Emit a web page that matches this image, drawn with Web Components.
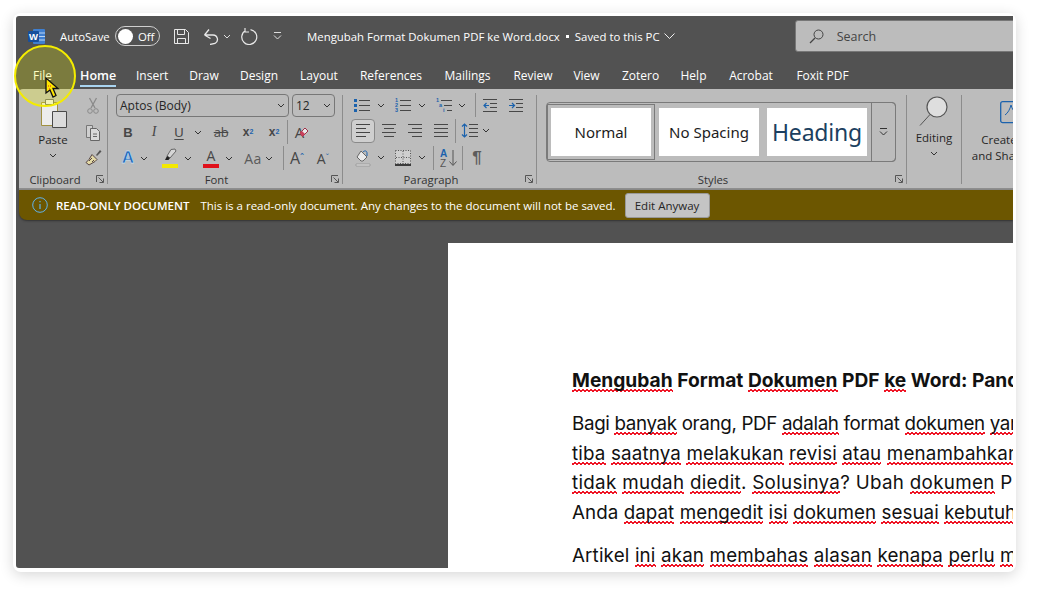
<!DOCTYPE html>
<html lang="id"><head><meta charset="utf-8"><title>Word</title>
<style>
html,body{margin:0;padding:0;background:#fff;width:1040px;height:596px;overflow:hidden;font-family:"Open Sans","Liberation Sans",sans-serif}
</style></head><body>
<script>
const UI='"Open Sans","Liberation Sans",sans-serif';
const G='#474747',BL='#1b62ad';
const svg=(w,h,b)=>`<svg xmlns="http://www.w3.org/2000/svg" width="${w}" height="${h}" viewBox="0 0 ${w} ${h}" fill="none" stroke-linecap="butt">${b}</svg>`;
const lines=(x,ys,x2,c=G)=>ys.map(y=>`<path d="M${x} ${y}.5H${x2}" stroke="${c}"/>`).join('');
const ICONS={
 caret:[8,svg(8,5,`<path d="M1 1l3 3 3-3" stroke="#333"/>`)],
 sep:[1,`<i style="display:block;width:1px;height:24px;background:#8c8c8c"></i>`],
 cut:[12,svg(12,18,`<path d="M2.500 1L8 11M9.500 1L4 11" stroke="#8a8a8a" stroke-width="1.300"/><circle cx="3" cy="14" r="2.300" stroke="#8a8a8a"/><circle cx="9" cy="14" r="2.300" stroke="#8a8a8a"/>`)],
 copy:[16,svg(16,17,`<path d="M1.500 1.500h6v12h-6z" fill="#cfcfcf" stroke="#777"/><path d="M5.500 4.500h6l3 3v9h-9z" fill="#d9d9d9" stroke="#666"/><path d="M8 10h4M8 12.500h4" stroke="#666"/>`)],
 painter:[17,svg(17,17,`<path d="M11 6l4-5 1.500 1.500-4.500 4.500z" fill="#555"/><path d="M7 5.500l5 5-2 2-6 3.500-3-2.500 3-3z" fill="#e3d9a5" stroke="#544"/><path d="M4 12l3-3M7 13l2-2" stroke="#544"/>`)],
 B:[10,`<b style="font:bold 13px 'Liberation Sans';color:${G}">B</b>`],
 I:[8,`<i style="font:italic 14px 'Liberation Serif';color:${G}">I</i>`],
 U:[11,`<u style="font:13px 'Liberation Sans';color:${G};text-underline-offset:2px">U</u>`],
 ab:[16,`<s style="font:13px 'Open Sans';color:${G};letter-spacing:-.3px">ab</s>`],
 sub:[12,`<span style="font:bold 12px/1 'Liberation Sans';color:${G}">x<sub style="font-size:7px;color:${BL};vertical-align:-3px;line-height:0">2</sub></span>`],
 sup:[12,`<span style="font:bold 12px/1 'Liberation Sans';color:${G}">x<sup style="font-size:7px;color:${BL};vertical-align:5px;line-height:0">2</sup></span>`],
 eraser:[18,`<span style="display:flex;align-items:center"><span style="font:15px 'Open Sans';color:${G};margin-right:-5px">A</span>${svg(10,10,`<path d="M1 6l5-5 3 3-5 5H3z" fill="#e9e9e9" stroke="#a03048"/><path d="M1 6l2-2 3 3-2 2H3z" fill="#c9405c"/>`)}</span>`],
 Afx:[14,`<span style="font:bold 17px 'Liberation Sans';color:#1c66b8;-webkit-text-stroke:.4px #eaf4ff;text-shadow:0 0 1.500px #7ec4f0">A</span>`],
 hl:[16,`<span style="display:block;height:20px;position:relative;width:16px"><svg width="16" height="15" viewBox="0 0 16 15" fill="none"><path d="M9 1.500L13 1l1 2-6 7-3-2z" fill="#d6d6d6" stroke="#666"/><path d="M5 8l3 2-1.500 2H3z" fill="#222"/></svg><i style="position:absolute;left:0;bottom:0;width:16px;height:4px;background:#f4e800"></i></span>`],
 fc:[16,`<span style="display:block;height:20px;position:relative;width:16px;text-align:center;font:14px/15px 'Open Sans';color:${G}">A<i style="position:absolute;left:0;bottom:0;width:16px;height:4px;background:#e0101a"></i></span>`],
 Aa:[18,`<span style="font:14px 'Open Sans';color:#5a5a5a;letter-spacing:.5px">Aa</span>`],
 grow:[16,`<span style="font:16px 'Open Sans';color:${G}">A<sup style="font-size:10px;color:${BL};vertical-align:5px;line-height:0">ˆ</sup></span>`],
 shrink:[15,`<span style="font:14px 'Open Sans';color:${G}">A<sup style="font-size:9px;color:${BL};vertical-align:5px;line-height:0">ˇ</sup></span>`],
 bullets:[16,svg(16,14,`<path d="M0 1h3v3H0zM0 6h3v3H0zM0 11h3v3H0z" fill="${BL}"/>`+lines(5,[2,7,12],16))],
 nums:[16,svg(16,14,`<g fill="${BL}" font-family="Liberation Sans" font-size="5.500" font-weight="700"><text x="0" y="4">1</text><text x="0" y="9">2</text><text x="0" y="14">3</text></g>`+lines(5,[2,7,12],16))],
 multi:[16,svg(16,14,`<g fill="${BL}" font-family="Liberation Sans" font-size="5.500" font-weight="700"><text x="0" y="4">1</text><text x="3" y="9">a</text><text x="7" y="14">i</text></g>`+lines(5,[2],16)+lines(8,[7],16)+lines(11,[12],16))],
 outd:[14,svg(14,13,lines(0,[0,12],14)+lines(7,[4,8],14)+`<path d="M6 6.500H1M3.500 4L1 6.500 3.500 9" stroke="${BL}" stroke-width="1.200"/>`)],
 ind:[14,svg(14,13,lines(0,[0,12],14)+lines(7,[4,8],14)+`<path d="M0 6.500h5M3 4l2.500 2.500L3 9" stroke="${BL}" stroke-width="1.200"/>`)],
 left:[24,`<span style="display:flex;width:22px;height:22px;border:1px solid #8a8a8a;border-radius:4px;background:#cfcfcf;align-items:center;justify-content:center">${svg(14,13,lines(0,[0,8],14,'#444')+lines(0,[4,12],10,'#444'))}</span>`],
 center:[14,svg(14,13,lines(0,[0,8],14)+lines(2,[4,12],12))],
 right:[14,svg(14,13,lines(0,[0,8],14)+lines(4,[4,12],14))],
 just:[14,svg(14,13,lines(0,[0,4,8,12],14))],
 spacing:[17,svg(17,16,`<path d="M3.500 1v13M1 3.500L3.500 1 6 3.500M1 11.500L3.500 14 6 11.500" stroke="${BL}" stroke-width="1.200"/>`+lines(8,[1,5,9,13],17))],
 shade:[16,svg(16,18,`<path d="M6 2l6 6-4 4H6L2 8z" fill="#e9e9e9" stroke="#666"/><path d="M8 3c2-2 4-1 4 1v3" stroke="${BL}"/><path d="M1 15h14v2H1z" fill="#dcdcdc" stroke="#888" stroke-width=".6"/>`)],
 borders:[16,svg(16,16,`<path d="M.5.500h15v13H.5z" fill="#cfcfcf" stroke="#555" stroke-dasharray="1 1.500"/><path d="M8 1v13M1 7.500h14" stroke="#555" stroke-dasharray="1 1.500"/><path d="M0 15h16" stroke="#111" stroke-width="1.500"/>`)],
 sort:[17,svg(17,18,`<text x="0" y="8" fill="${BL}" font-family="Liberation Sans" font-size="10" font-weight="700">A</text><text x="0" y="17.500" fill="#555" font-family="Liberation Sans" font-size="10">Z</text><path d="M13 1v15M9.500 12.500L13 16.500l3.500-4" stroke="#555"/>`)],
 pil:[11,`<b style="font:bold 17px 'Liberation Sans';color:#5c5c5c">¶</b>`],
 launch:[8,svg(8,8,`<path d="M.5 7V.5H7" stroke="#555"/><path d="M2.500 2.500L7 7M3.500 7.500H7.500V3.500" stroke="#555"/>`)]
};
const def=(n,c)=>customElements.define(n,c);
const shadow=(el,h)=>{el.attachShadow({mode:'open'}).innerHTML=h};
def('r-row',class extends HTMLElement{connectedCallback(){
 let x=+this.getAttribute('x0'),out='';
 for(const it of this.getAttribute('items').trim().split(/\s+/)){
  const [n,c]=it.split('@');const [w,h]=ICONS[n];const l=+c-w/2;
  out+=`<span style="margin-left:${l-x}px;width:${w}px">${h}</span>`;x=l+w;
 }
 shadow(this,`<style>:host{display:flex;align-items:center;height:${this.getAttribute('h')||26}px}span{display:flex;flex:none;align-items:center;justify-content:center;line-height:1}</style>${out}`);
}});
def('r-group',class extends HTMLElement{connectedCallback(){
 const lab=this.getAttribute('label'),w=this.getAttribute('w');
 shadow(this,`<style>:host{display:flex;flex:none;width:${w}px;height:99px;color:#262626}
 .c{flex:1;display:flex;flex-direction:column;min-width:0}.m{height:82px}
 .l{height:16px;display:flex;align-items:center;font-size:11.300px;color:#333}
 .l span{flex:1;text-align:center}.l svg{margin-right:3px;margin-left:6px}
 .s{width:1px;background:#8c8c8c;margin:6px 0 4px}</style>
 <div class="c"><div class="m"><slot></slot></div>${lab?`<div class="l"><span>${lab}</span>${ICONS.launch[1]}</div>`:''}</div><div class="s"></div>`);
}});
def('r-combo',class extends HTMLElement{connectedCallback(){
 shadow(this,`<style>:host{display:flex;box-sizing:border-box;height:23px;width:${this.getAttribute('w')}px;border:1px solid #777;border-radius:4px;align-items:center;justify-content:space-between;padding:0 3px;font-size:12px;color:#262626;flex:none}</style><slot></slot>${ICONS.caret[1]}`);
}});
def('win-frame',class extends HTMLElement{connectedCallback(){
 shadow(this,`<style>:host{display:block;position:relative;box-sizing:border-box;width:1003px;height:559px;margin:13px 0 0 13px;padding:3px 3px 4px;background:#fff;border-radius:8px;box-shadow:0 3px 14px rgba(0,0,0,.16)}
 .w{height:100%;background:#525252;border-radius:3px 0 0 3px;overflow:hidden;display:flex;flex-direction:column;font-family:${UI}}</style><div class="w"><slot></slot></div><slot name="over"></slot>`);
}});
def('title-bar',class extends HTMLElement{connectedCallback(){
 shadow(this,`<style>:host{display:flex;flex:none;height:41px;align-items:center;color:#fff;font-size:11.400px;white-space:nowrap;padding-bottom:1px;box-sizing:border-box}
 .t{display:flex;flex:none;box-sizing:border-box;width:45px;height:20px;border:1px solid #cfcfcf;border-radius:10px;align-items:center;margin-left:7px;padding-left:2px;font-size:11.400px}
 .t i{width:15px;height:15px;border-radius:50%;background:#fff;margin-right:5px;flex:none}
 .s{display:flex;box-sizing:border-box;width:260px;height:32px;margin-left:120px;background:#bcbcbc;border:1px solid #777;border-radius:3px;align-items:center;color:#444;flex:none;padding-left:13px;font-size:12.500px}
 svg,span{flex:none}</style>
 <svg style="margin-left:12px" width="17" height="17" viewBox="0 0 17 17"><rect x="5" y="1" width="12" height="15" rx="1" fill="#3f7fd0"/><path d="M9 5h8M9 8.500h8M9 12h8" stroke="#bcd6f3"/><rect y="3" width="11" height="11" rx="1" fill="#174f9c"/><text x="5.500" y="12" text-anchor="middle" fill="#fff" font-family="Liberation Sans" font-size="9.500" font-weight="700">W</text></svg>
 <span style="margin-left:15px;width:48px">AutoSave</span>
 <div class="t"><i></i>Off</div>
 <svg style="margin-left:13px" width="17" height="17" viewBox="0 0 17 17" fill="none" stroke="#e8e8e8"><path d="M1.500 1.500h11l3 3v11h-14z"/><path d="M4.500 1.500v5h7v-5M4.500 15.500v-5h8v5"/></svg>
 <svg style="margin-left:13px" width="17" height="17" viewBox="0 0 17 17" fill="none" stroke="#e8e8e8" stroke-width="1.300"><path d="M1.500 7L6 1.500M1.500 7l6 3.500M1.500 7H10a4.500 4.500 0 0 1 2 8.500L7 16.500"/></svg>
 <svg style="margin-left:3px" width="8" height="5" viewBox="0 0 8 5" fill="none"><path d="M1 1l3 3 3-3" stroke="#ddd"/></svg>
 <svg style="margin-left:10px" width="17" height="17" viewBox="0 0 17 17" fill="none" stroke="#e8e8e8" stroke-width="1.200"><path d="M9.500 1.600A7.500 7.500 0 1 1 4.500 2.500M4 0v4h4" /></svg>
 <svg style="margin-left:15px" width="9" height="8" viewBox="0 0 9 8" fill="none" stroke="#ddd"><path d="M1 .5h7M1 3.500l3.500 3.500L8 3.500"/></svg>
 <span style="margin-left:25px">Mengubah Format Dokumen PDF ke Word.docx</span><i style="width:3px;height:3px;background:#fff;margin:1px 6px 0 6px;flex:none"></i><span>Saved to this PC</span>
 <svg style="margin-left:4px" width="11" height="6" viewBox="0 0 11 6" fill="none"><path d="M.5.500l5 5 5-5" stroke="#eee"/></svg>
 <div class="s"><svg width="15" height="15" viewBox="0 0 15 15" fill="none" stroke="#444"><circle cx="9.500" cy="5.500" r="4.500"/><path d="M6 9l-5 5" stroke-width="1.200"/></svg><span style="margin-left:13px">Search</span></div>`);
}});
def('tab-bar',class extends HTMLElement{connectedCallback(){
 const tabs=[['File',33,19],['Home',80,36],['Insert',136,32],['Draw',189,30],['Design',239,40],['Layout',300,38],['References',359,64],['Mailings',443,49],['Review',513,40],['View',573,27],['Zotero',621,39],['Help',680,27],['Acrobat',728,46],['Foxit PDF',796,53]];
 let x=16,o='';for(const [t,l,w] of tabs){o+=`<span class="${t=='Home'?'on':''}" style="margin-left:${l-x}px;width:${w}px">${t}</span>`;x=l+w}
 shadow(this,`<style>:host{display:flex;flex:none;height:32px;color:#fff;font-size:12px;white-space:nowrap}
 span{display:block;box-sizing:border-box;height:32px;padding-top:10px;text-align:center;flex:none;position:relative}
 .on{font-weight:600;font-size:12.500px}.on::after{content:"";position:absolute;left:0;right:0;bottom:2px;height:2px;background:#a9d4f0}</style>${o}`);
}});
def('r-ribbon',class extends HTMLElement{connectedCallback(){
 shadow(this,`<style>:host{display:flex;flex:none;height:101px;box-sizing:border-box;margin-left:3px;padding-left:1px;background:#bcbcbc;border-top-left-radius:4px;border-bottom:2px solid #8e8e8e}</style><slot></slot>`);
}});
def('ro-banner',class extends HTMLElement{connectedCallback(){
 shadow(this,`<style>:host{display:flex;flex:none;height:30px;margin-left:3px;background:#6c5600;border-radius:0 0 0 8px;align-items:center;color:#fff;font-size:11.500px;white-space:nowrap;box-shadow:0 1px 2px #333}
 b{font-weight:600;margin-left:8px}span{margin-left:11px}
 button{all:unset;box-sizing:border-box;display:flex;align-items:center;justify-content:center;width:85px;height:25px;margin-left:9px;background:#c4c4c4;border:1px solid #999;border-radius:3px;color:#262626;font-size:11.500px}</style>
 <svg style="margin-left:13px" width="16" height="16" viewBox="0 0 16 16" fill="none"><circle cx="8" cy="8" r="7.300" stroke="#62b3ea"/><path d="M8 7v5" stroke="#62b3ea" stroke-width="1.200"/><path d="M8 4v1.300" stroke="#62b3ea" stroke-width="1.200"/></svg>
 <b>READ-ONLY DOCUMENT</b><span>This is a read-only document. Any changes to the document will not be saved.</span><button>Edit Anyway</button>`);
}});
def('doc-area',class extends HTMLElement{connectedCallback(){
 shadow(this,`<style>:host{display:block;flex:1;min-height:0;padding:23px 0 0 432px;overflow:hidden}
 .p{background:#fff;height:400px;padding:123px 0 0 124px;overflow:hidden}</style><div class="p"><slot></slot></div>`);
}});
def('doc-line',class extends HTMLElement{connectedCallback(){
 const h=this.hasAttribute('bold'),e=this.hasAttribute('end'),ls=this.getAttribute('ls')||0;
 shadow(this,`<style>:host{display:block;white-space:nowrap;font:${h?'700 19.200px':'400 18.800px'}/29.400px "Inter","Liberation Sans",sans-serif;letter-spacing:${ls}px;color:#111;margin-bottom:${e?14:0}px}</style><slot></slot>`);
}});
def('sp-w',class extends HTMLElement{connectedCallback(){
 shadow(this,`<style>:host{display:inline;background:
 linear-gradient(135deg,transparent 40%,#ee1525 40%,#ee1525 60%,transparent 60%) 0 100%/4px 3px repeat-x,
 linear-gradient(45deg,transparent 40%,#ee1525 40%,#ee1525 60%,transparent 60%) 2px 100%/4px 3px repeat-x}</style><slot></slot>`);
}});
def('style-gallery',class extends HTMLElement{connectedCallback(){
 shadow(this,`<style>:host{display:flex;box-sizing:border-box;width:350px;height:60px;margin:13px 0 0 9px;border:1px solid #7a7a7a;border-radius:4px;padding-top:5px;box-shadow:inset 0 0 0 1px #bcbcbc}
 .m{box-sizing:border-box;width:25px;height:60px;margin:-6px -1px 0 auto;border:1px solid #7a7a7a;border-radius:0 4px 4px 0;display:flex;align-items:center;justify-content:center}</style>
 <slot></slot><div class="m"><svg width="9" height="8" viewBox="0 0 9 8" fill="none" stroke="#333"><path d="M1 .5h7M1 3.500l3.500 3.500L8 3.500"/></svg></div>`);
}});
def('style-item',class extends HTMLElement{connectedCallback(){
 const s=this.hasAttribute('sel');
 shadow(this,`<style>:host{display:flex;flex:none;box-sizing:border-box;width:100px;height:48px;margin:${s?'':'0 0 0 8px'};background:#fff;align-items:center;justify-content:center;color:#1c1c1c;font:${this.getAttribute('fs')||15}px "Noto Sans",sans-serif;${s?'margin-left:4px;outline:3px solid #bcbcbc;box-shadow:0 0 0 4px #7a7a7a;':''}}</style><slot></slot>`);
}});
def('big-btn',class extends HTMLElement{connectedCallback(){
 shadow(this,`<style>:host{display:flex;flex-direction:column;align-items:center;font-size:11.500px;color:#262626;white-space:nowrap;line-height:16px}</style><slot></slot>`);
}});
def('click-spot',class extends HTMLElement{connectedCallback(){
 shadow(this,`<style>:host{position:absolute;left:1px;top:32px;width:62px;height:62px;box-sizing:border-box;border:2px solid #f4ec00;border-radius:50%;background:rgba(255,255,0,.24)}
 svg{position:absolute;left:29px;top:30px}</style>
 <svg width="16" height="22" viewBox="0 0 16 22"><path d="M1 1v15l4-3 3 7 3-1.500-3-7h5z" fill="#ffe600" stroke="#111" stroke-width="1.300"/><path d="M3 9h1M4 12h1M5 9h1" stroke="#e02020"/></svg>`);
}});
</script>
<win-frame>
 <title-bar></title-bar>
 <tab-bar></tab-bar>
 <r-ribbon>
  <r-group label="Clipboard" w="88">
   <div style="display:flex;height:82px">
    <big-btn style="width:42px;margin-left:12px;padding-top:9px">
     <svg width="30" height="30" viewBox="0 0 30 30"><path d="M3.500 4.500h16v23h-16z" fill="#ececec" stroke="#a09040"/><path d="M7.500 1.500h8v5h-8z" fill="#efefef" stroke="#6c6c6c"/><path d="M14.500 13.500h14v16h-14z" fill="#dcdcdc" stroke="#4a4a4a"/></svg>
     <span style="margin-top:4px">Paste</span>
     <svg style="margin-top:5px" width="8" height="5" viewBox="0 0 8 5" fill="none"><path d="M1 1l3 3 3-3" stroke="#333"/></svg>
    </big-btn>
    <div style="margin-left:5px;padding-top:4px;width:17px">
     <r-row x0="74" items="cut@88" h="26"></r-row><r-row x0="74" items="copy@88" h="26"></r-row><r-row x0="74" items="painter@88" h="25"></r-row>
    </div>
   </div>
  </r-group>
  <r-group label="Font" w="235">
   <div style="display:flex;gap:3px;padding:5px 0 0 8px;box-sizing:border-box;height:30px"><r-combo w="173">Aptos (Body)</r-combo><r-combo w="43">12</r-combo></div>
   <r-row x0="108" h="26" items="B@128 I@154 U@179 caret@198 ab@221 sub@248 sup@274 sep@287 eraser@302"></r-row>
   <r-row x0="108" h="26" items="Afx@128 caret@144 hl@170 caret@188 fc@211 caret@229 Aa@253 caret@269 sep@283 grow@297 shrink@323"></r-row>
  </r-group>
  <r-group label="Paragraph" w="194">
   <div style="padding-top:4px">
   <r-row x0="343" h="24" items="bullets@362 caret@381 nums@403 caret@422 multi@444 caret@462 sep@475 outd@490 ind@516"></r-row>
   <r-row x0="343" h="27" items="left@363 center@389 right@415 just@441 sep@455 spacing@469 caret@486"></r-row>
   <r-row x0="343" h="27" items="shade@363 caret@381 borders@403 caret@422 sep@433 sort@448 sep@462 pil@477"></r-row>
   </div>
  </r-group>
  <r-group label="Styles" w="370">
   <style-gallery>
    <style-item sel>Normal</style-item>
    <style-item>No Spacing</style-item>
    <style-item fs="23" style="color:#1c3f60;letter-spacing:-.2px">Heading</style-item>
   </style-gallery>
  </r-group>
  <r-group w="55">
   <big-btn style="padding-top:7px">
    <svg width="30" height="30" viewBox="0 0 30 30"><circle cx="18" cy="11" r="10" fill="#dedede" stroke="#555" stroke-width="1.200"/><path d="M11 18.500L1 29.500" stroke="#555"/></svg>
    <span style="margin-top:4px">Editing</span>
    <svg style="margin-top:5px" width="8" height="5" viewBox="0 0 8 5" fill="none"><path d="M1 1l3 3 3-3" stroke="#333"/></svg>
   </big-btn>
  </r-group>
  <big-btn style="width:74px;flex:none;padding-top:12px;box-sizing:border-box">
   <svg style="margin-left:26px" width="24" height="23" viewBox="0 0 24 23" fill="none"><rect x=".7" y=".7" width="22" height="21" rx="2" stroke="#1b62ad" stroke-width="1.300"/><path d="M5 14c3-2 5-6 6-10 1 4 3 7 6 8" stroke="#1b62ad"/></svg>
   <span style="margin-top:8px">Create</span><span>and Share</span>
  </big-btn>
 </r-ribbon>
 <ro-banner></ro-banner>
 <doc-area>
  <doc-line bold end><sp-w>Mengubah</sp-w> Format <sp-w>Dokumen</sp-w> PDF <sp-w>ke</sp-w> Word: Panduan</doc-line>
  <doc-line ls="-.35">Bagi <sp-w>banyak</sp-w> orang, PDF <sp-w>adalah</sp-w> format <sp-w>dokumen</sp-w> <sp-w>yang</sp-w></doc-line>
  <doc-line ls=".15"><sp-w>tiba</sp-w> <sp-w>saatnya</sp-w> <sp-w>melakukan</sp-w> <sp-w>revisi</sp-w> <sp-w>atau</sp-w> <sp-w>menambahkan</sp-w></doc-line>
  <doc-line ls=".3"><sp-w>tidak</sp-w> <sp-w>mudah</sp-w> <sp-w>diedit</sp-w>. <sp-w>Solusinya</sp-w>? Ubah <sp-w>dokumen</sp-w> PDF</doc-line>
  <doc-line ls=".05" end>Anda <sp-w>dapat</sp-w> <sp-w>mengedit</sp-w> <sp-w>isi</sp-w> <sp-w>dokumen</sp-w> <sp-w>sesuai</sp-w> <sp-w>kebutuhan</sp-w></doc-line>
  <doc-line ls=".15">Artikel <sp-w>ini</sp-w> <sp-w>akan</sp-w> <sp-w>membahas</sp-w> <sp-w>alasan</sp-w> <sp-w>kenapa</sp-w> <sp-w>perlu</sp-w> <sp-w>mengubah</sp-w></doc-line>
 </doc-area>
 <click-spot slot="over"></click-spot>
</win-frame>
</body></html>
